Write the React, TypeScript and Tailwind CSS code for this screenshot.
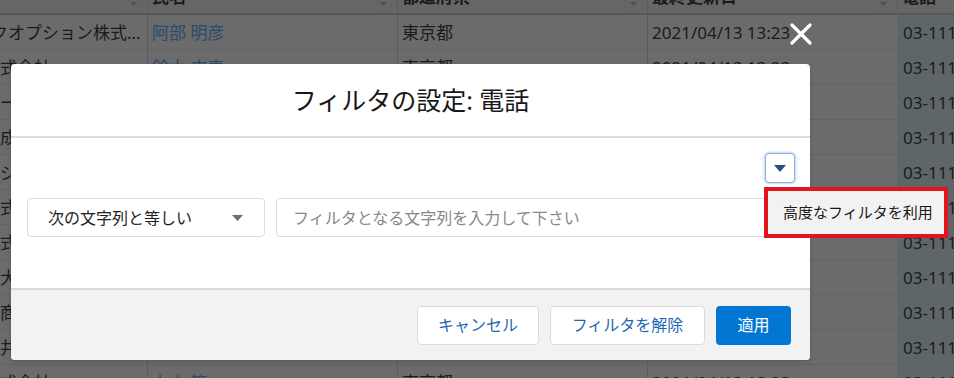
import React from "react";

const rows = [
  { c1: "クオプション株式…", off: true, c2: "阿部 明彦" },
  { c1: "式会社", c2: "鈴木 史恵" },
  { c1: "ーテック株式会社", c2: "佐藤 健一" },
  { c1: "成和商事株式会社", c2: "高橋 美咲" },
  { c1: "ジャパン株式会社", c2: "田中 誠" },
  { c1: "式会社", c2: "伊藤 直樹" },
  { c1: "式会社", c2: "渡辺 陽子" },
  { c1: "大手町商事", c2: "山本 大輔" },
  { c1: "商会", c2: "中村 恵" },
  { c1: "井村物産", c2: "小林 翔" },
  { c1: "式会社", c2: "上本 篤" },
];

function HeaderSort() {
  return (
    <div className="ml-auto mr-[5px] mt-[2px] flex h-[30px] w-[17px] shrink-0 items-end justify-center rounded-[3px] border border-[#626262] pb-[6px]">
      <svg width="7" height="4" viewBox="0 0 7 4">
        <polygon points="0,0 7,0 3.5,4" fill="#505050" />
      </svg>
    </div>
  );
}

export default function App() {
  return (
    <div className="relative h-[378px] w-[954px] overflow-hidden bg-[#6b6b6b] font-['Noto_Sans','Noto_Sans_CJK_JP',sans-serif] text-[17px] text-[#1b1b1b]">
      {/* background grid */}
      <div className="-mt-[20px] flex flex-col">
        <div className="flex h-[35px] border-b-2 border-[#575757] bg-[#666666] font-bold">
          <div className="flex w-[148px] shrink-0 items-center border-r border-[#5c5c5c]">
            <HeaderSort />
          </div>
          <div className="flex w-[250px] shrink-0 items-center border-r border-[#5c5c5c] pl-[4px]">
            <span>氏名</span>
            <HeaderSort />
          </div>
          <div className="flex w-[250px] shrink-0 items-center border-r border-[#5c5c5c] pl-[4px]">
            <span>都道府県</span>
            <HeaderSort />
          </div>
          <div className="flex w-[250px] shrink-0 items-center border-r border-[#5c5c5c] pl-[4px]">
            <span>最終更新日</span>
            <HeaderSort />
          </div>
          <div className="flex min-w-0 flex-1 items-center overflow-hidden whitespace-nowrap pl-[4px]">
            <span>電話</span>
          </div>
        </div>
        {rows.map((r, i) => (
          <div key={i} className="flex h-[35px] border-b border-[#626262] leading-none">
            <div className="flex w-[148px] shrink-0 items-center overflow-hidden whitespace-nowrap border-r border-[#5c5c5c]">
              <span className={r.off ? "-ml-[9px]" : ""}>{r.c1}</span>
            </div>
            <div className="flex w-[250px] shrink-0 items-center border-r border-[#5c5c5c] pl-[4px] text-[#2a4a6c]">
              {r.c2}
            </div>
            <div className="flex w-[250px] shrink-0 items-center border-r border-[#5c5c5c] pl-[4px]">東京都</div>
            <div className="flex w-[250px] shrink-0 items-center pl-[4px]">2021/04/13 13:23</div>
            <div className="flex min-w-0 flex-1 items-center overflow-hidden whitespace-nowrap border-l border-[#3f6c75] bg-[#5f6668] pl-[4px]">
              03-1111-1111
            </div>
          </div>
        ))}
      </div>

      {/* close X */}
      <div className="absolute left-[790px] top-[23px] h-[22px] w-[22px]">
        <svg width="22" height="22" viewBox="0 0 22 22">
          <line x1="2" y1="2" x2="20" y2="20" stroke="#ffffff" strokeWidth="3.2" strokeLinecap="round" />
          <line x1="20" y1="2" x2="2" y2="20" stroke="#ffffff" strokeWidth="3.2" strokeLinecap="round" />
        </svg>
      </div>

      {/* modal */}
      <div className="absolute left-[11px] top-[64px] flex w-[799px] flex-col rounded-[4px] bg-white shadow-[0_2px_4px_rgba(0,0,0,0.15)]">
        <div className="flex h-[74px] items-center justify-center rounded-t-[4px] border-b-2 border-[#dddbda] text-[25px] leading-none text-[#181818]">
          フィルタの設定: 電話
        </div>
        <div className="flex h-[150px] flex-col pl-4 pr-[15px] pt-[15px]">
          <div className="flex justify-end">
            <div className="relative">
              <div className="flex h-[30px] w-[30px] items-center justify-center rounded-[4px] border border-[#8fb3dc] bg-white shadow-[0_0_3px_#7fa8d8]">
                <svg width="12" height="7" viewBox="0 0 12 7">
                  <polygon points="0,0 12,0 6,7" fill="#2a4f80" />
                </svg>
              </div>
              <div className="absolute left-[-1px] top-[34px] z-10 flex h-[51px] w-[184px] items-center border-4 border-[#e3141e] bg-[#f3f2f2] pl-[15px] text-[15px] leading-none text-[#181818]">
                高度なフィルタを利用
              </div>
            </div>
          </div>
          <div className="mt-[15px] flex gap-[11px]">
            <div className="flex h-[39px] w-[238px] shrink-0 items-center justify-between rounded-[4px] border border-[#dddbda] pl-[20px] pr-[21px] text-[16px] leading-none text-[#1e1e1e]">
              <span>次の文字列と等しい</span>
              <svg width="11" height="6" viewBox="0 0 11 6">
                <polygon points="0,0 11,0 5.5,6" fill="#706e6b" />
              </svg>
            </div>
            <div className="flex h-[39px] min-w-0 flex-1 items-center rounded-[4px] border border-[#dddbda] pl-[16px] text-[16px] leading-none text-[#8a8886]">
              フィルタとなる文字列を入力して下さい
            </div>
          </div>
        </div>
        <div className="flex h-[72px] items-center justify-end gap-[11px] rounded-b-[4px] border-t-2 border-[#dddbda] bg-[#f3f2f2] pr-[19px] text-[16px] leading-none">
          <div className="flex h-[39px] w-[122px] items-center justify-center rounded-[4px] border border-[#dddbda] bg-white text-[#1f68b3]">
            キャンセル
          </div>
          <div className="flex h-[39px] w-[155px] items-center justify-center rounded-[4px] border border-[#dddbda] bg-white text-[#1f68b3]">
            フィルタを解除
          </div>
          <div className="flex h-[39px] w-[75px] items-center justify-center rounded-[4px] bg-[#0176d3] text-white">
            適用
          </div>
        </div>
      </div>
    </div>
  );
}
